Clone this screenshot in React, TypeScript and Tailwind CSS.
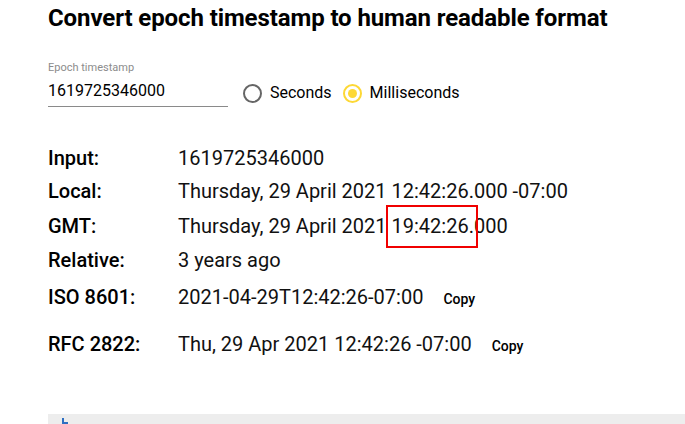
import React from "react";

const rows: { label: string; value: React.ReactNode; copy?: boolean; h: string }[] = [
  { label: "Input:", value: "1619725346000", h: "h-[33px]" },
  { label: "Local:", value: "Thursday, 29 April 2021 12:42:26.000 -07:00", h: "h-[35px]" },
  {
    label: "GMT:",
    value: (
      <>
        Thursday, 29 April 2021{" "}
        <span className="relative">
          19:42:26.000
          <span className="pointer-events-none absolute left-[-6px] top-[-9px] h-[43px] w-[92px] border-[2.5px] border-[#f00000]" />
        </span>
      </>
    ),
    h: "h-[34px]",
  },
  { label: "Relative:", value: "3 years ago", h: "h-[37px]" },
  { label: "ISO 8601:", value: "2021-04-29T12:42:26-07:00", copy: true, h: "h-[47px]" },
  { label: "RFC 2822:", value: "Thu, 29 Apr 2021 12:42:26 -07:00", copy: true, h: "h-[58px]" },
];

export default function App() {
  return (
    <div className="h-[424px] w-[685px] overflow-hidden bg-white pl-12 font-['Roboto',sans-serif] text-[#111]">
      <h1 className="pt-[3px] text-[24px] font-bold leading-[30px] tracking-[-0.1px] text-black">
        Convert epoch timestamp to human readable format
      </h1>

      <div className="mt-[29px] flex items-end">
        <div className="w-[180px] border-b border-[#8a8a8a]">
          <div className="text-[11px] leading-[12px] text-[#8c8c8c]">Epoch timestamp</div>
          <div className="pb-[6px] pt-[7px] text-[16px] leading-[19px] text-black">1619725346000</div>
        </div>
        <div className="mb-[2px] ml-[15px] flex items-center">
          <span className="flex h-[19px] w-[19px] rounded-full border-2 border-[#666]" />
          <span className="ml-[8px] text-[16px] text-black">Seconds</span>
          <span className="ml-[11px] flex h-[19px] w-[19px] items-center justify-center rounded-full border-2 border-[#fdd835]">
            <span className="h-[9px] w-[9px] rounded-full bg-[#fdd835]" />
          </span>
          <span className="ml-[8px] text-[16px] text-black">Milliseconds</span>
        </div>
      </div>

      <div className="mt-[39px] text-[20px] leading-[24px]">
        {rows.map((r) => (
          <div key={r.label} className={`flex items-start ${r.h}`}>
            <div className="w-[130px] font-medium text-black">{r.label}</div>
            <div className="flex items-baseline text-[#111]">
              <span>{r.value}</span>
              {r.copy ? (
                <span className="ml-[20px] text-[14px] font-medium text-black">Copy</span>
              ) : null}
            </div>
          </div>
        ))}
      </div>

      <div className="mt-[24px] h-[40px] bg-[#ededed] pl-[14px] pt-[4px]">
        <svg width="6" height="6" viewBox="0 0 6 6" className="block">
          <path d="M0 0h2v4h4v2H0z" fill="#2f6fc2" />
        </svg>
      </div>
    </div>
  );
}
